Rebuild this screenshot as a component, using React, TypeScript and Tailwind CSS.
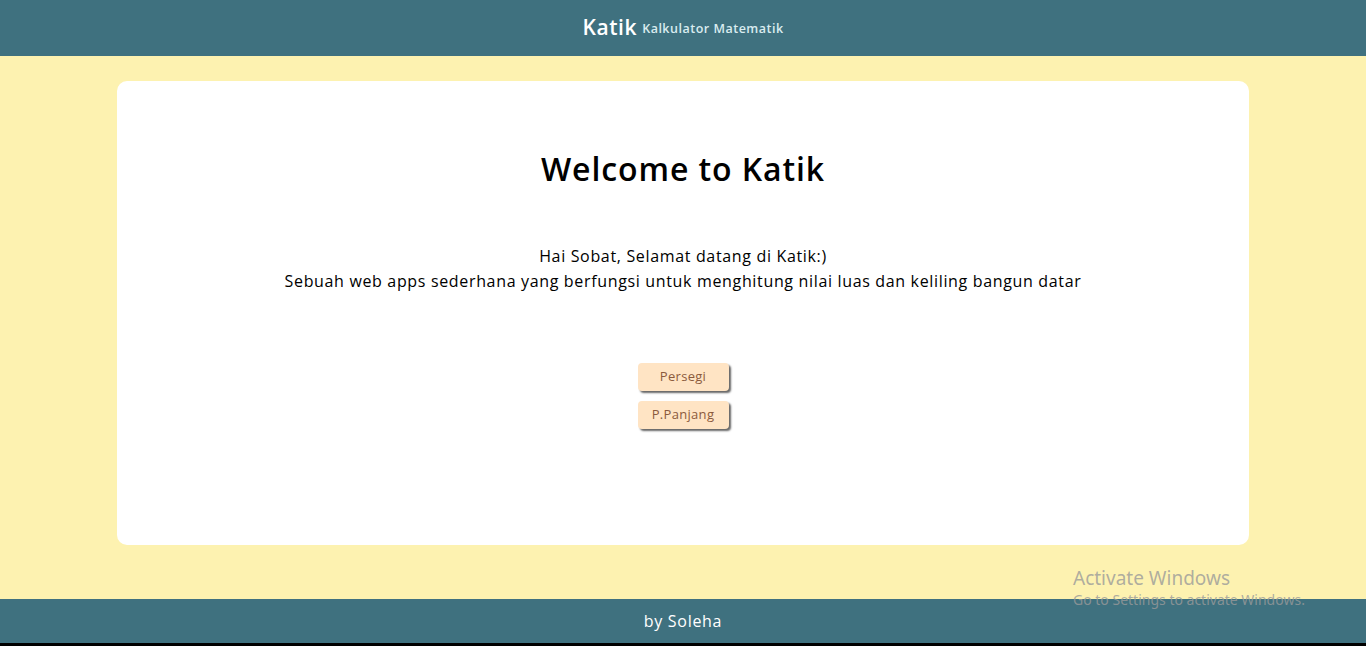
export default function App() {
  const font = { fontFamily: '"Open Sans", "Noto Sans", sans-serif' };
  return (
    <div className="relative flex h-[646px] w-full flex-col bg-[#fdf2b0]" style={font}>
      <header className="flex h-[56px] items-center justify-center gap-[5px] bg-[#3f717f]">
        <span className="text-[21px] font-semibold tracking-[0.6px] text-white">Katik</span>
        <span className="mt-[3px] text-[12.5px] font-semibold tracking-[0.5px] text-[#d9ecef]">Kalkulator Matematik</span>
      </header>
      <main className="flex flex-1 flex-col px-[117px] pt-[25px]">
        <div className="flex h-[464px] flex-col items-center rounded-[10px] bg-white">
          <h1 className="mt-[66px] text-[32px] font-semibold leading-[44px] tracking-[0.9px] text-black">Welcome to Katik</h1>
          <div className="mt-[53px] text-center text-[16px] leading-[25px] tracking-[0.66px] text-black">
            <p>Hai Sobat, Selamat datang di Katik:)</p>
            <p>Sebuah web apps sederhana yang berfungsi untuk menghitung nilai luas dan keliling bangun datar</p>
          </div>
          <div className="mt-[69px] flex flex-col items-center gap-[10px]">
            <button className="h-[28px] w-[91px] rounded-[4px] bg-[#ffe4c4] text-[13px] tracking-[0.3px] text-[#8b5a3c] shadow-[2px_2px_2px_rgba(0,0,0,0.6)]">Persegi</button>
            <button className="h-[28px] w-[91px] rounded-[4px] bg-[#ffe4c4] text-[13px] tracking-[0.3px] text-[#8b5a3c] shadow-[2px_2px_2px_rgba(0,0,0,0.6)]">P.Panjang</button>
          </div>
        </div>
      </main>
      <footer className="flex h-[44px] items-center justify-center bg-[#3f717f] text-[16px] tracking-[0.7px] text-white">by Soleha</footer>
      <div className="h-[3px] bg-black" />
      <div className="pointer-events-none absolute left-[1073px] top-[569px] leading-none text-[#9a9a9a]/80" style={{ fontFamily: '"Noto Sans", "Open Sans", sans-serif' }}>
        <div className="text-[19px]">Activate Windows</div>
        <div className="mt-[5px] text-[14px]">Go to Settings to activate Windows.</div>
      </div>
    </div>
  );
}
